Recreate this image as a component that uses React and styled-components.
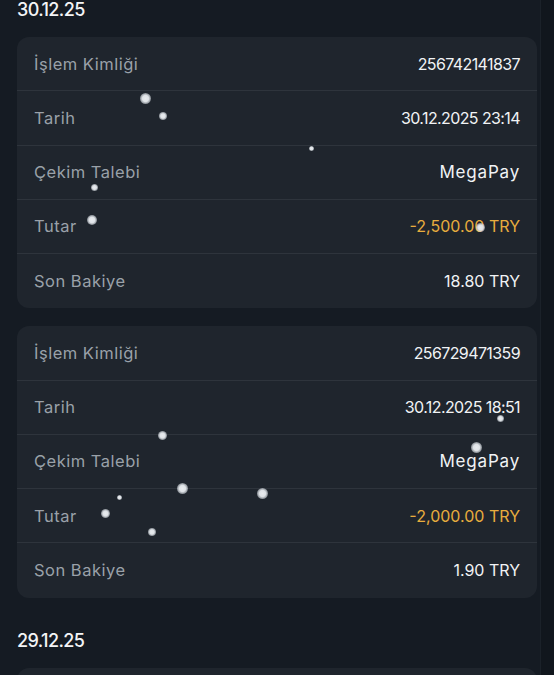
import React from "react";
import styled, { createGlobalStyle } from "styled-components";

const GlobalStyle = createGlobalStyle`
    html, body {
        margin: 0;
        padding: 0;
        background: #151b23;
    }
    body {
        font-family: "Inter", "Noto Sans", sans-serif;
        -webkit-font-smoothing: antialiased;
    }
`;

const transactions = [
    {
        date: "30.12.25",
        items: [
            {
                id: "256742141837",
                time: "30.12.2025 23:14",
                method: "MegaPay",
                amount: "-2,500.00 TRY",
                balance: "18.80 TRY",
            },
            {
                id: "256729471359",
                time: "30.12.2025 18:51",
                method: "MegaPay",
                amount: "-2,000.00 TRY",
                balance: "1.90 TRY",
            },
        ],
    },
    {
        date: "29.12.25",
        items: [
            {
                id: "256701128846",
                time: "29.12.2025 21:07",
                method: "MegaPay",
                amount: "-1,500.00 TRY",
                balance: "4.40 TRY",
            },
        ],
    },
];

const flakes = [
    [145, 98, 11], [163, 116, 8], [311, 148, 5], [94, 187, 7], [92, 220, 10],
    [480, 227, 9], [500, 418, 7], [162, 435, 9], [476, 447, 11], [182, 488, 11],
    [262, 493, 11], [119, 497, 5], [105, 513, 9], [152, 532, 8],
];

const Page = styled.div`
    position: relative;
    display: flex;
    width: 554px;
    height: 675px;
    overflow: hidden;
    background: #151b23;
`;

const Main = styled.div`
    width: 540px;
    padding-left: 17px;
    box-sizing: border-box;
    display: flex;
    flex-direction: column;
`;

const Gutter = styled.div`
    flex: 1;
    background: #11161d;
    border-left: 1px solid #1b2129;
`;

const Section = styled.section`
    display: flex;
    flex-direction: column;
    gap: 18px;
    & + & {
        margin-top: 33px;
    }
`;

const DateTitle = styled.div`
    font-size: 18px;
    font-weight: 500;
    line-height: 20px;
    color: #f3f4f6;
    letter-spacing: -0.6px;
    margin-bottom: -1px;
`;

const Card = styled.div`
    width: 520px;
    background: #1f252d;
    border-radius: 12px;
    overflow: hidden;
    padding-bottom: 1px;
`;

const Row = styled.div`
    display: flex;
    align-items: center;
    justify-content: space-between;
    height: 53.25px;
    padding: 0 17px;
    & + & {
        border-top: 1px solid #2e343c;
    }
`;

const Label = styled.span`
    font-size: 16.5px;
    color: #9aa1a9;
    letter-spacing: 0.5px;
`;

const Value = styled.span`
    font-size: ${({ $wide }) => ($wide ? "17px" : "16px")};
    font-weight: 400;
    letter-spacing: ${({ $wide, $tight }) => ($wide ? "0.8px" : $tight ? "-0.6px" : "0")};
    color: ${({ $accent }) => ($accent ? "#e8ad3e" : "#f1f3f5")};
`;

const Flake = styled.span`
    position: absolute;
    border-radius: 50%;
    background: radial-gradient(circle, #e9ecef 0%, #dfe3e7 40%, rgba(210, 216, 222, 0.55) 70%, rgba(210, 216, 222, 0) 100%);
    pointer-events: none;
`;

const TransactionCard = ({ tx }) => (
    <Card>
        <Row>
            <Label>İşlem Kimliği</Label>
            <Value $tight>{tx.id}</Value>
        </Row>
        <Row>
            <Label>Tarih</Label>
            <Value $tight>{tx.time}</Value>
        </Row>
        <Row>
            <Label>Çekim Talebi</Label>
            <Value $wide>{tx.method}</Value>
        </Row>
        <Row>
            <Label>Tutar</Label>
            <Value $accent>{tx.amount}</Value>
        </Row>
        <Row>
            <Label>Son Bakiye</Label>
            <Value>{tx.balance}</Value>
        </Row>
    </Card>
);

const App = () => {
    return (
        <Page>
            <GlobalStyle />
            <Main>
                {transactions.map((group) => (
                    <Section key={group.date}>
                        <DateTitle>{group.date}</DateTitle>
                        {group.items.map((tx) => (
                            <TransactionCard key={tx.id} tx={tx} />
                        ))}
                    </Section>
                ))}
            </Main>
            <Gutter />
            {flakes.map(([x, y, d], i) => (
                <Flake
                    key={i}
                    style={{ left: x - d / 2, top: y - d / 2, width: d, height: d }}
                />
            ))}
        </Page>
    );
};

export default App;
